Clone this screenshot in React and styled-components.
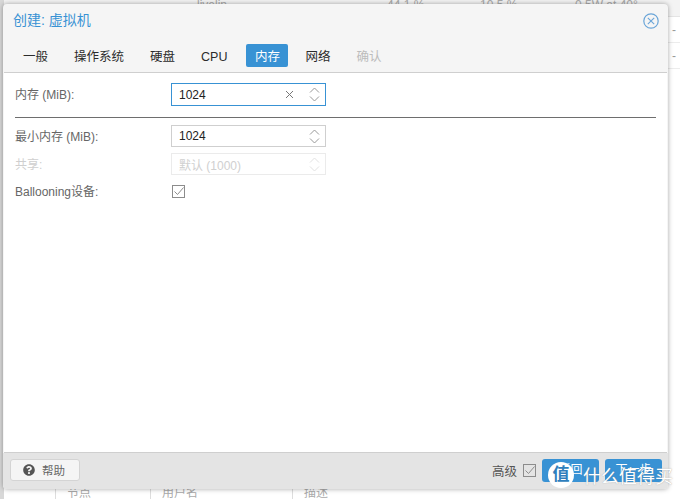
import React from 'react';
import styled, { createGlobalStyle } from 'styled-components';
import { FaQuestionCircle } from 'react-icons/fa';

const font = '"Liberation Sans", "Noto Sans CJK SC", sans-serif';
const blue = '#3892d4';

const Global = createGlobalStyle`
  html, body {
    margin: 0;
    padding: 0;
    background: #fff;
    font-family: ${font};
    font-size: 12px;
  }
`;

const Desktop = styled.div`
  width: 680px;
  height: 499px;
  position: relative;
  overflow: hidden;
  background: #fff;
`;

const BackTop = styled.div`
  height: 17px;
  box-sizing: border-box;
  border-bottom: 1px solid #e4e4e4;
  background: #f3f3f3;
  color: #a8a8a8;
  display: flex;
  line-height: 10px;
  font-size: 12px;
`;

const BackCell = styled.span`
  width: ${p => p.$w}px;
  flex: none;
`;

const BackRow = styled.div`
  height: 26px;
  box-sizing: border-box;
  border-bottom: 1px solid #ececec;
  padding-left: 672px;
  line-height: 26px;
  color: #999;
`;

const LeftStrip = styled.div`
  position: absolute;
  left: 0;
  top: 0;
  bottom: 0;
  width: 4px;
  background: #d8d8d8;
`;

const BackBottom = styled.div`
  position: absolute;
  left: 0;
  right: 0;
  top: 489px;
  height: 10px;
  display: flex;
  color: #aaa;
  line-height: 9px;
`;

const BackHead = styled.span`
  width: ${p => p.$w}px;
  flex: none;
  box-sizing: border-box;
  padding-left: 11px;
  border-left: 1px solid ${p => (p.$first ? 'transparent' : '#ddd')};
`;

const Window = styled.div`
  position: absolute;
  left: 3px;
  top: 4px;
  width: 665px;
  height: 485px;
  background: #f5f5f5;
  border-radius: 4px;
  box-shadow: 0 0 5px rgba(0, 0, 0, 0.35);
  display: flex;
  flex-direction: column;
`;

const Header = styled.div`
  height: 35px;
  flex: none;
  display: flex;
  align-items: center;
  justify-content: space-between;
  padding: 0 9px 2px 10px;
  box-sizing: border-box;
`;

const Title = styled.div`
  font-size: 14px;
  color: ${blue};
  padding-bottom: 3px;
`;

const Tabs = styled.div`
  height: 33px;
  flex: none;
  display: flex;
  gap: 8px;
  padding: 5px 0 0 11px;
  box-sizing: border-box;
`;

const Tab = styled.div`
  height: 23px;
  line-height: 26px;
  padding: 0 ${p => (p.$active ? 8.5 : 9)}px;
  margin-left: ${p => (p.$active ? 2 : 0)}px;
  border-radius: 2px;
  font-size: 12.5px;
  color: ${p => (p.$disabled ? '#bcbcbc' : p.$active ? '#fff' : '#2b2b2b')};
  background: ${p => (p.$active ? blue : 'transparent')};
`;

const Body = styled.div`
  flex: 1;
  margin: 0 1px;
  background: #fff;
  border-top: 1px solid #cfcfcf;
  border-bottom: 1px solid #cfcfcf;
  padding: 10px 11px 0 11px;
`;

const Row = styled.div`
  display: flex;
  align-items: center;
  height: ${p => p.$h || 23}px;
  margin-bottom: ${p => p.$mb || 0}px;
`;

const Label = styled.div`
  width: 156px;
  flex: none;
  padding-bottom: 2px;
  color: ${p => (p.$disabled ? '#cfcfcf' : '#666')};
`;

const Field = styled.div`
  width: 155px;
  height: ${p => p.$h || 23}px;
  box-sizing: border-box;
  display: flex;
  align-items: center;
  padding: 0 5px 0 7px;
  border: 1px solid ${p => (p.$focus ? blue : p.$disabled ? '#ebebeb' : '#cfcfcf')};
  color: ${p => (p.$disabled ? '#d0d0d0' : '#222')};
`;

const Value = styled.span`
  flex: 1;
`;

const Clear = styled.svg`
  width: 9px;
  height: 9px;
  margin-right: 15px;
  stroke: #777;
  stroke-width: 1;
  fill: none;
`;

const Spin = styled.svg`
  width: 11px;
  height: 17px;
  stroke: ${p => (p.$disabled ? '#e2e2e2' : '#999')};
  stroke-width: 1;
  fill: none;
`;

const Divider = styled.div`
  height: 1px;
  background: #6e6e6e;
  margin: 11px 0 7px;
`;

const Check = styled.svg`
  width: 13px;
  height: 13px;
  flex: none;
  margin-left: ${p => p.$ml || 0}px;
  fill: none;
  stroke: #8c8c8c;
`;

const Footer = styled.div`
  height: 36px;
  flex: none;
  background: #e4e4e4;
  border-radius: 0 0 4px 4px;
  display: flex;
  align-items: center;
  padding: 0 6px 2px 7px;
  box-sizing: border-box;
  gap: 6px;
`;

const HelpButton = styled.div`
  width: 70px;
  height: 22px;
  box-sizing: border-box;
  display: flex;
  align-items: center;
  gap: 7px;
  padding-left: 12px;
  margin-right: auto;
  background: #f5f5f5;
  border: 1px solid #d4d4d4;
  border-radius: 3px;
  color: #666;
  font-size: 11.5px;
  svg {
    color: #555;
    font-size: 12px;
  }
`;

const Advanced = styled.div`
  display: flex;
  align-items: center;
  color: #555;
  font-size: 12.5px;
`;

const PrimaryButton = styled.div`
  width: 57px;
  height: 23px;
  line-height: 23px;
  text-align: center;
  background: ${blue};
  color: #fff;
  border-radius: 3px;
`;

const Watermark = styled.div`
  position: absolute;
  left: 548px;
  top: 462px;
  display: flex;
  align-items: center;
  gap: 9px;
`;

const Badge = styled.div`
  width: 26px;
  height: 26px;
  border-radius: 50%;
  background: #fff;
  color: #2f7fbd;
  font-size: 17px;
  font-weight: bold;
  line-height: 26px;
  text-align: center;
`;

const BrandText = styled.div`
  color: #fff;
  font-size: 18px;
  white-space: nowrap;
  text-shadow: 0 0 1px rgba(120, 120, 120, 0.7);
`;

const SpinIcon = ({ disabled }) => (
  <Spin $disabled={disabled} viewBox="0 0 11 17">
    <path d="M1 6.5 5.5 2 10 6.5M1 10.5 5.5 15 10 10.5" />
  </Spin>
);

const CheckBox = ({ ml }) => (
  <Check $ml={ml} viewBox="0 0 13 13">
    <rect x="0.5" y="0.5" width="12" height="12" />
    <path d="M2.5 6.5 5.5 9.5 11.5 2.5" />
  </Check>
);

const tabs = ['一般', '操作系统', '硬盘', 'CPU', '内存', '网络', '确认'];

export default function App() {
  return (
    <Desktop>
      <Global />
      <BackTop>
        <BackCell $w={197} />
        <BackCell $w={190}>livelin</BackCell>
        <BackCell $w={93}>44.1 %</BackCell>
        <BackCell $w={95}>10.5 %</BackCell>
        <BackCell $w={97}>0.5W at 40°</BackCell>
      </BackTop>
      <BackRow>-</BackRow>
      <BackRow>-</BackRow>
      <LeftStrip />
      <BackBottom>
        <BackHead $first $w={55} />
        <BackHead $w={95}>节点</BackHead>
        <BackHead $w={142}>用户名</BackHead>
        <BackHead $w={100}>描述</BackHead>
      </BackBottom>

      <Window>
        <Header>
          <Title>创建: 虚拟机</Title>
          <svg width="16" height="16" viewBox="0 0 16 16" fill="none" stroke="#6aa5d8">
            <circle cx="8" cy="8" r="7.2" strokeWidth="1.2" />
            <path d="M4.8 4.8 11.2 11.2M11.2 4.8 4.8 11.2" strokeWidth="1.1" />
          </svg>
        </Header>
        <Tabs>
          {tabs.map(t => (
            <Tab key={t} $active={t === '内存'} $disabled={t === '确认'}>{t}</Tab>
          ))}
        </Tabs>
        <Body>
          <Row>
            <Label>内存 (MiB):</Label>
            <Field $focus>
              <Value>1024</Value>
              <Clear viewBox="0 0 9 9"><path d="M1 1 8 8M8 1 1 8" /></Clear>
              <SpinIcon />
            </Field>
          </Row>
          <Divider />
          <Row $h={22} $mb={6}>
            <Label>最小内存 (MiB):</Label>
            <Field $h={22}>
              <Value>1024</Value>
              <SpinIcon />
            </Field>
          </Row>
          <Row $h={22} $mb={9}>
            <Label $disabled>共享:</Label>
            <Field $h={22} $disabled>
              <Value>默认 (1000)</Value>
              <SpinIcon disabled />
            </Field>
          </Row>
          <Row $h={14}>
            <Label>Ballooning设备:</Label>
            <CheckBox ml={1} />
          </Row>
        </Body>
        <Footer>
          <HelpButton><FaQuestionCircle />帮助</HelpButton>
          <Advanced>高级<CheckBox ml={6} /></Advanced>
          <PrimaryButton>返回</PrimaryButton>
          <PrimaryButton>下一步</PrimaryButton>
        </Footer>
      </Window>

      <Watermark>
        <Badge>值</Badge>
        <BrandText>什么值得买</BrandText>
      </Watermark>
    </Desktop>
  );
}
